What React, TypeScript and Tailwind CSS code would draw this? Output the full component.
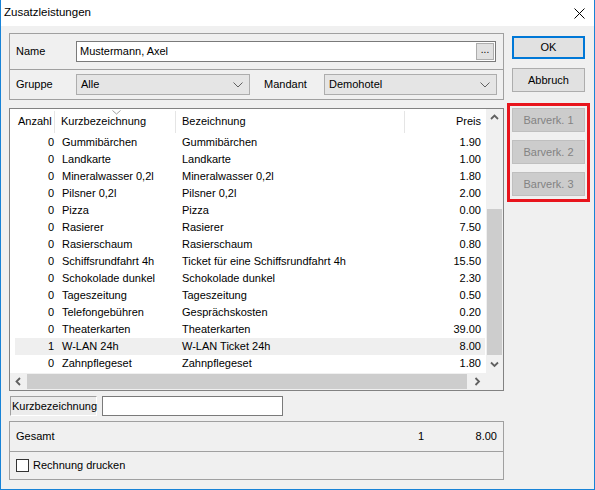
const rows = [
  { n: 0, kurz: "Gummibärchen", bez: "Gummibärchen", preis: "1.90" },
  { n: 0, kurz: "Landkarte", bez: "Landkarte", preis: "1.00" },
  { n: 0, kurz: "Mineralwasser 0,2l", bez: "Mineralwasser 0,2l", preis: "1.80" },
  { n: 0, kurz: "Pilsner 0,2l", bez: "Pilsner 0,2l", preis: "2.00" },
  { n: 0, kurz: "Pizza", bez: "Pizza", preis: "0.00" },
  { n: 0, kurz: "Rasierer", bez: "Rasierer", preis: "7.50" },
  { n: 0, kurz: "Rasierschaum", bez: "Rasierschaum", preis: "0.80" },
  { n: 0, kurz: "Schiffsrundfahrt 4h", bez: "Ticket für eine Schiffsrundfahrt 4h", preis: "15.50" },
  { n: 0, kurz: "Schokolade dunkel", bez: "Schokolade dunkel", preis: "2.30" },
  { n: 0, kurz: "Tageszeitung", bez: "Tageszeitung", preis: "0.50" },
  { n: 0, kurz: "Telefongebühren", bez: "Gesprächskosten", preis: "0.20" },
  { n: 0, kurz: "Theaterkarten", bez: "Theaterkarten", preis: "39.00" },
  { n: 1, kurz: "W-LAN 24h", bez: "W-LAN Ticket 24h", preis: "8.00", selected: true },
  { n: 0, kurz: "Zahnpflegeset", bez: "Zahnpflegeset", preis: "1.80" },
];

// small bold arrow used on the scrollbars
function ScrollArrow({ dir }: { dir: "up" | "down" | "left" | "right" }) {
  const d = {
    up: "M1 5 L4.5 1.5 L8 5",
    down: "M1 1.5 L4.5 5 L8 1.5",
    left: "M5 1 L1.5 4.5 L5 8",
    right: "M1.5 1 L5 4.5 L1.5 8",
  }[dir];
  const vertical = dir === "up" || dir === "down";
  return (
    <svg width={vertical ? 9 : 7} height={vertical ? 7 : 9} viewBox={vertical ? "0 0 9 7" : "0 0 7 9"}>
      <path d={d} fill="none" stroke="#606060" strokeWidth="1.8" />
    </svg>
  );
}

function ComboChevron() {
  return (
    <svg width="10" height="6" viewBox="0 0 10 6">
      <path d="M0.5 0.5 L5 5 L9.5 0.5" fill="none" stroke="#606060" strokeWidth="1" />
    </svg>
  );
}

function Combo({ value, width }: { value: string; width: string }) {
  return (
    <div className={`${width} h-[21px] flex items-center justify-between pl-[4px] pr-[6px] bg-[#e5e5e5] border border-[#adadad]`}>
      <span>{value}</span>
      <ComboChevron />
    </div>
  );
}

export default function App() {
  return (
    <div className="w-[595px] h-[490px] flex flex-col bg-[#f0f0f0] border-l border-r border-b border-[#1883d7] text-[11px] text-black font-['Liberation_Sans',Arial,sans-serif] leading-none overflow-hidden">
      {/* title bar */}
      <div className="h-[26px] shrink-0 bg-white flex items-center justify-between pl-[3px] pr-[9px]">
        <span className="text-[11.5px]">Zusatzleistungen</span>
        <svg width="11" height="11" viewBox="0 0 11 11">
          <path d="M0.5 0.5 L10.5 10.5 M10.5 0.5 L0.5 10.5" stroke="#000" strokeWidth="1" />
        </svg>
      </div>

      <div className="flex flex-1">
        {/* left column */}
        <div className="ml-[8px] w-[495px] flex flex-col pt-[7px]">
          {/* top group */}
          <div className="h-[67px] border border-[#a0a0a0] flex flex-col">
            <div className="h-[36px] flex items-center border-b border-[#a0a0a0] pl-[6px]">
              <span className="w-[60px]">Name</span>
              <div className="w-[420px] h-[21px] bg-white border border-[#7a7a7a] flex items-center justify-between pl-[3px] pr-px">
                <span>Mustermann, Axel</span>
                <div className="w-[18px] h-[17px] bg-[#e1e1e1] border border-[#adadad] flex items-end justify-center pb-[4px] text-[10px]">
                  ...
                </div>
              </div>
            </div>
            <div className="flex-1 flex items-center pl-[6px]">
              <span className="w-[60px]">Gruppe</span>
              <Combo value="Alle" width="w-[174px]" />
              <span className="ml-[14px] w-[60px]">Mandant</span>
              <Combo value="Demohotel" width="w-[173px]" />
            </div>
          </div>

          {/* list */}
          <div className="mt-[8px] h-[283px] border border-[#828282] bg-white flex flex-col">
            <div className="flex h-[264px]">
              <div className="flex-1 flex flex-col pl-[5px]">
                <div className="h-[25px] shrink-0 flex items-center relative">
                  <div className="w-[40px] h-[22px] flex items-center pl-[3px] border-r border-[#e5e5e5]">Anzahl</div>
                  <div className="w-[121px] h-[22px] flex items-center pl-[6px] border-r border-[#e5e5e5] relative">
                    Kurzbezeichnung
                    <svg className="absolute left-[57px] -top-[1px]" width="9" height="5" viewBox="0 0 9 5">
                      <path d="M0.5 0.5 L4.5 4 L8.5 0.5" fill="none" stroke="#a0a0a0" strokeWidth="1" />
                    </svg>
                  </div>
                  <div className="w-[229px] h-[22px] flex items-center pl-[6px] border-r border-[#e5e5e5]">Bezeichnung</div>
                  <div className="w-[80px] h-[22px] flex items-center justify-end pr-[4px]">Preis</div>
                </div>
                {rows.map((r) => (
                  <div key={r.kurz} className={`h-[17px] w-[470px] flex items-center ${r.selected ? "bg-[#efefef]" : ""}`}>
                    <div className="w-[40px] text-right pr-[1px]">{r.n}</div>
                    <div className="w-[121px] pl-[7px] whitespace-nowrap">{r.kurz}</div>
                    <div className="w-[229px] pl-[6px] whitespace-nowrap">{r.bez}</div>
                    <div className="w-[80px] text-right pr-[4px]">{r.preis}</div>
                  </div>
                ))}
              </div>
              {/* vertical scrollbar */}
              <div className="w-[17px] bg-[#f0f0f0] flex flex-col">
                <div className="h-[17px] flex items-center justify-center">
                  <ScrollArrow dir="up" />
                </div>
                <div className="h-[83px]" />
                <div className="h-[146px] mx-px bg-[#cdcdcd]" />
                <div className="flex-1 flex items-center justify-center">
                  <ScrollArrow dir="down" />
                </div>
              </div>
            </div>
            {/* horizontal scrollbar */}
            <div className="flex-1 flex bg-[#f0f0f0]">
              <div className="w-[17px] flex items-center justify-center">
                <ScrollArrow dir="left" />
              </div>
              <div className="w-[440px] my-px bg-[#cdcdcd]" />
              <div className="flex-1 flex items-center justify-end pr-[5px]">
                <ScrollArrow dir="right" />
              </div>
              <div className="w-[17px]" />
            </div>
          </div>

          {/* search row */}
          <div className="mt-[5px] h-[20px] flex items-center">
            <div className="ml-px w-[87px] h-[20px] flex items-center pl-[1px] bg-[#ececec] border border-t-[#a0a0a0] border-l-[#a0a0a0] border-b-white border-r-white whitespace-nowrap">
              Kurzbezeichnung
            </div>
            <div className="ml-[5px] w-[181px] h-[20px] bg-white border border-[#7a7a7a]" />
          </div>

          {/* bottom group */}
          <div className="mt-[5px] h-[59px] border border-[#a0a0a0] flex flex-col">
            <div className="h-[30px] flex items-center border-b border-[#a0a0a0] pl-[6px] pr-[6px]">
              <span className="flex-1">Gesamt</span>
              <span className="w-[10px] text-right">1</span>
              <span className="w-[73px] text-right">8.00</span>
            </div>
            <div className="flex-1 flex items-center pl-[6px]">
              <div className="w-[13px] h-[13px] bg-white border border-[#333333]" />
              <span className="ml-[4px]">Rechnung drucken</span>
            </div>
          </div>
        </div>

        {/* right column */}
        <div className="ml-[8px] pt-[10px] flex flex-col">
          <div className="w-[73px] h-[23px] bg-[#e1e1e1] border-2 border-[#0078d7] flex items-center justify-center">OK</div>
          <div className="mt-[9px] w-[73px] h-[24px] bg-[#e1e1e1] border border-[#adadad] flex items-center justify-center">Abbruch</div>
          <div className="mt-[11px] -ml-[5px] w-[83px] border-[3px] border-[#e8141c] p-[2px] pb-[3px] flex flex-col gap-[8px]">
            {["Barverk. 1", "Barverk. 2", "Barverk. 3"].map((b) => (
              <div key={b} className="w-[73px] h-[24px] bg-[#cccccc] border border-[#bfbfbf] text-[#838383] flex items-center justify-center">
                {b}
              </div>
            ))}
          </div>
        </div>
      </div>
    </div>
  );
}
